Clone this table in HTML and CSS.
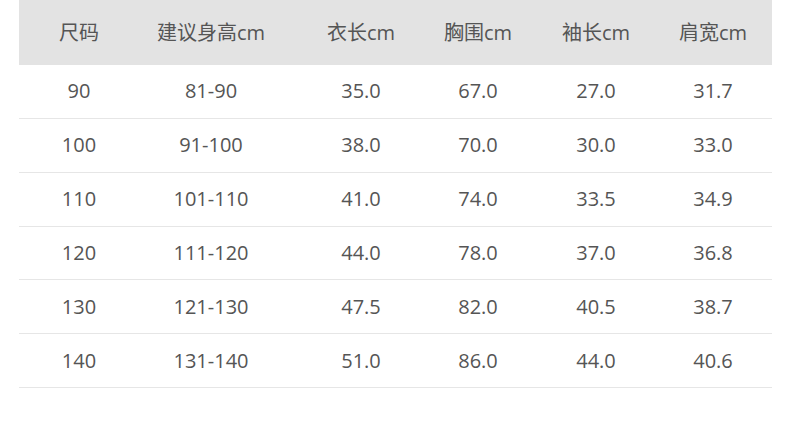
FILE: index.html
```html
<!DOCTYPE html>
<html lang="zh">
<head>
<meta charset="utf-8">
<link rel="stylesheet" href="styles.css">
</head>
<body>
<div class="size-table">
  <div class="row head">
    <div>尺码</div><div>建议身高cm</div><div>衣长cm</div><div>胸围cm</div><div>袖长cm</div><div>肩宽cm</div>
  </div>
  <div class="row"><div>90</div><div>81-90</div><div>35.0</div><div>67.0</div><div>27.0</div><div>31.7</div></div>
  <div class="row"><div>100</div><div>91-100</div><div>38.0</div><div>70.0</div><div>30.0</div><div>33.0</div></div>
  <div class="row"><div>110</div><div>101-110</div><div>41.0</div><div>74.0</div><div>33.5</div><div>34.9</div></div>
  <div class="row"><div>120</div><div>111-120</div><div>44.0</div><div>78.0</div><div>37.0</div><div>36.8</div></div>
  <div class="row"><div>130</div><div>121-130</div><div>47.5</div><div>82.0</div><div>40.5</div><div>38.7</div></div>
  <div class="row"><div>140</div><div>131-140</div><div>51.0</div><div>86.0</div><div>44.0</div><div>40.6</div></div>
</div>
</body>
</html>
```
FILE: styles.css
```css
html, body {
  margin: 0;
  padding: 0;
  background: #ffffff;
}
body {
  font-family: "Open Sans", "Noto Sans", "Noto Sans CJK SC", sans-serif;
  font-size: 20px;
  color: #555555;
}
.size-table {
  margin-left: 19px;
  width: 753px;
}
.row {
  display: grid;
  grid-template-columns: 120px 144px 156px 78px 158px 76px 21px;
  box-sizing: border-box;
  height: 53.85px;
  align-items: center;
  border-bottom: 1px solid #e6e6e6;
}
.row > div {
  text-align: center;
  line-height: 1;
  white-space: nowrap;
  display: flex;
  justify-content: center;
}
.row.head {
  height: 65px;
  background: #e3e3e3;
  border-bottom: none;
}
```
